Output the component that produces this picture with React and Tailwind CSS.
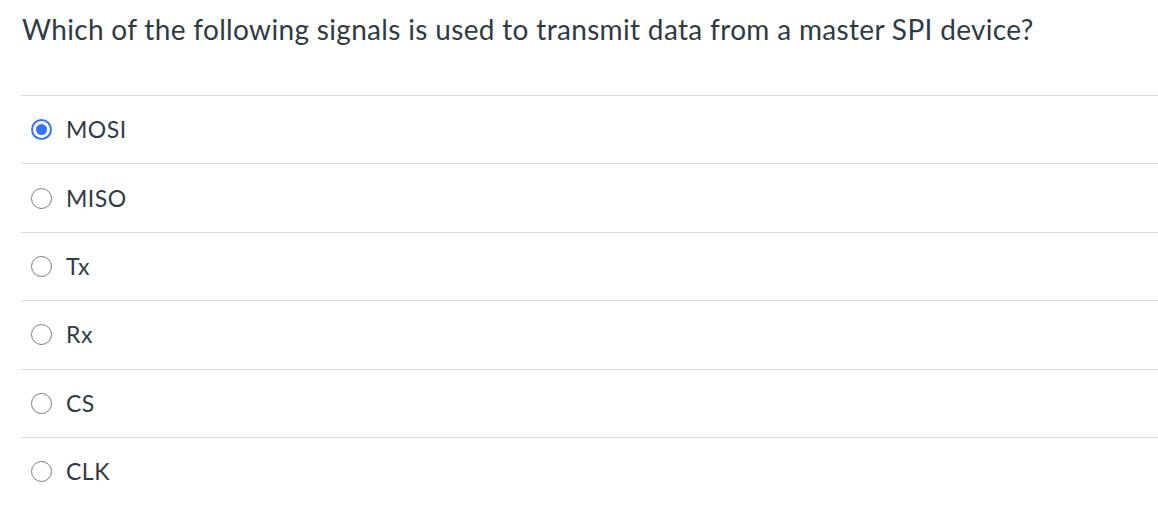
import React, { useState } from 'react'

const options = ['MOSI', 'MISO', 'Tx', 'Rx', 'CS', 'CLK']

export default function App() {
  const [picked, setPicked] = useState('MOSI')

  return (
    <div className="min-h-[522px] bg-white text-[#2d3b45] font-['Lato','Noto_Sans',sans-serif] pl-[21px]">
      <div className="h-[95px] pt-[13px] pl-px text-[28px] leading-[1.2] tracking-[0.33px]">
        Which of the following signals is used to transmit data from a master SPI device?
      </div>
      <div>
        {options.map(opt => (
          <label
            key={opt}
            className="flex h-[68.4px] cursor-pointer items-center border-t border-[#dcdddd] pl-[10px]"
            onClick={() => setPicked(opt)}
          >
            {picked === opt ? (
              <span className="flex h-[21px] w-[21px] items-center justify-center rounded-full border-2 border-[#3474f0] bg-white">
                <span className="h-[11px] w-[11px] rounded-full bg-[#3474f0]" />
              </span>
            ) : (
              <span className="h-[21px] w-[21px] rounded-full border-[1.5px] border-[#7a7a7a] bg-white" />
            )}
            <span className="ml-[14px] text-[23px] leading-none tracking-[0.5px]">{opt}</span>
          </label>
        ))}
      </div>
    </div>
  )
}
